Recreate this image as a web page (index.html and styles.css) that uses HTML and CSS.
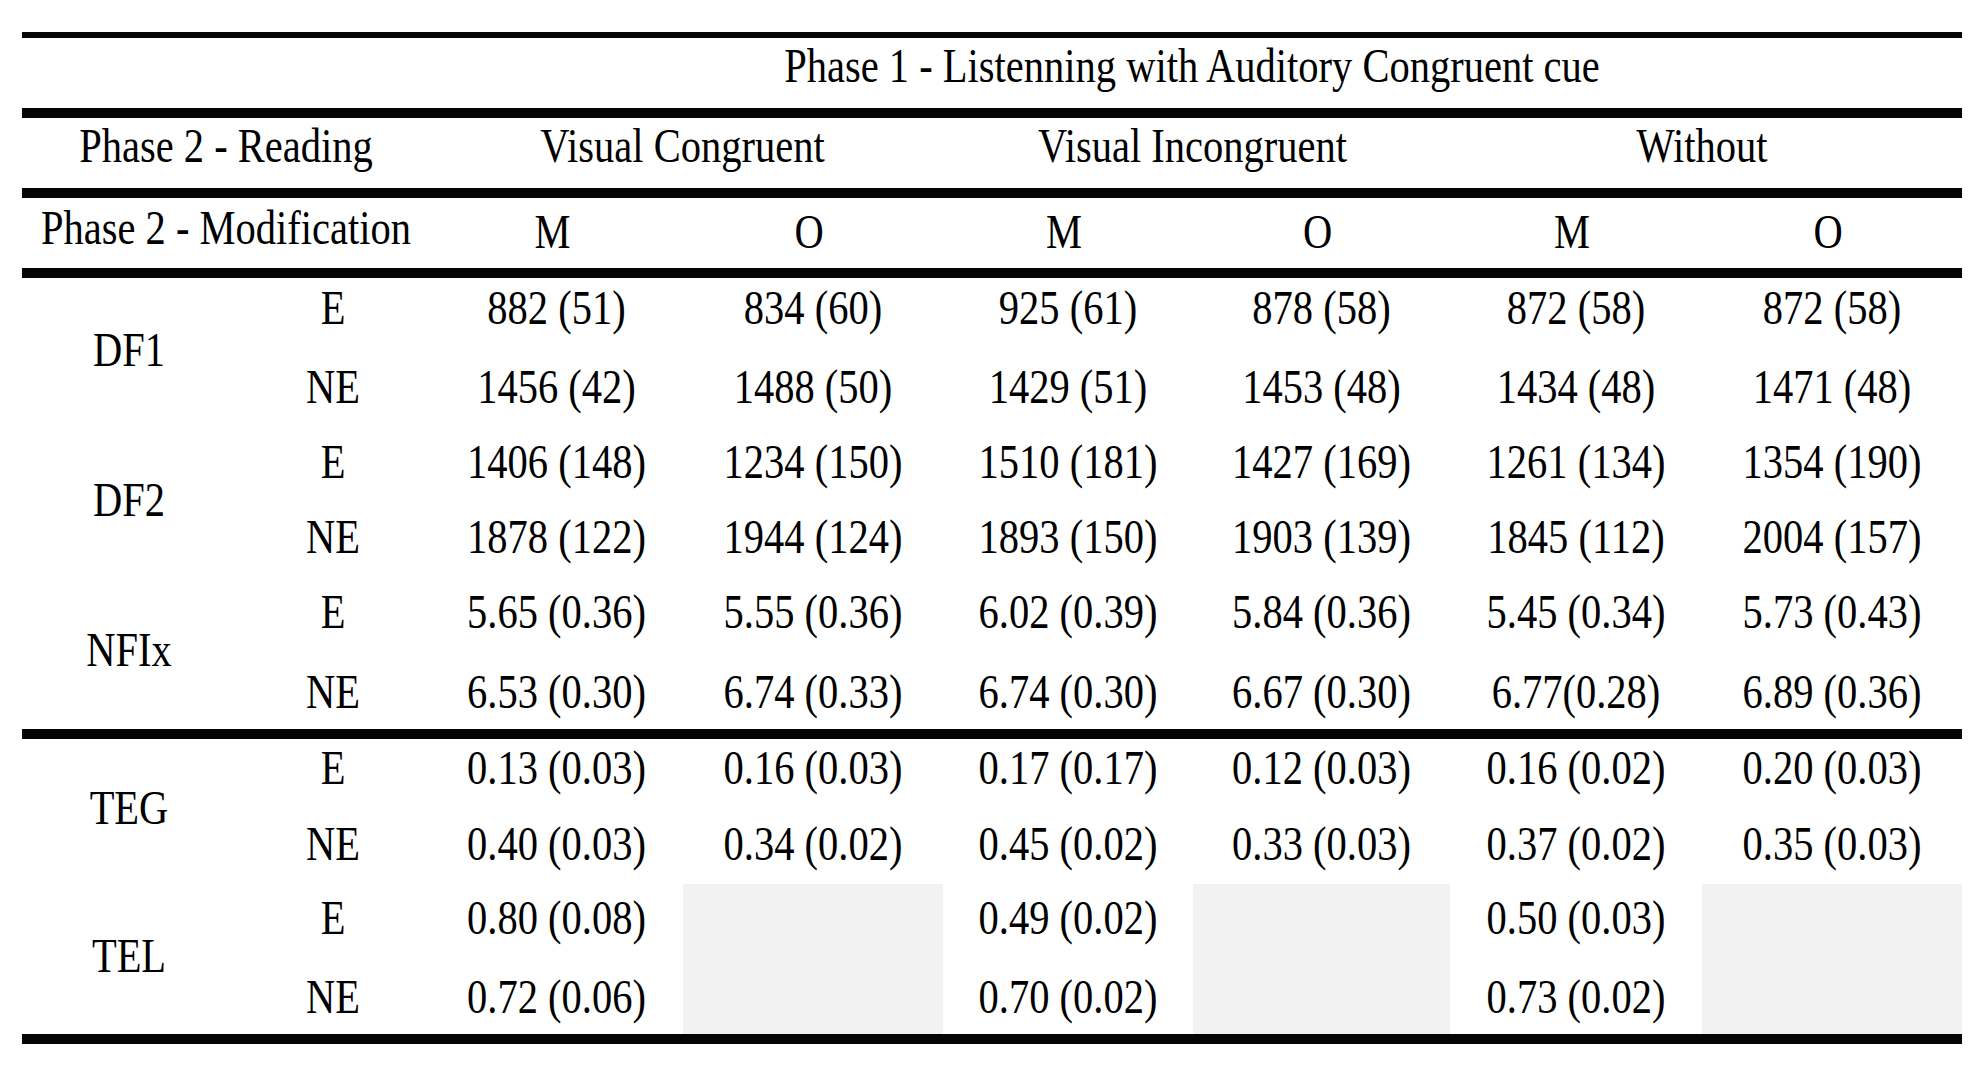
FILE: index.html
```html
<!DOCTYPE html>
<html lang="en">
<head>
<meta charset="utf-8">
<title>Results table</title>
<link rel="stylesheet" href="styles.css">
</head>
<body>
<table class="tbl">
  <colgroup>
    <col class="c-lab">
    <col class="c-sub">
    <col class="c-m1">
    <col class="c-o1">
    <col class="c-m2">
    <col class="c-o2">
    <col class="c-m3">
    <col class="c-o3">
  </colgroup>
  <thead>
    <tr class="r-phase1">
      <th colspan="2"></th>
      <th colspan="6" class="num"><span class="t">Phase 1 - Listenning with Auditory Congruent cue</span></th>
    </tr>
    <tr class="r-reading">
      <th colspan="2"><span class="t">Phase 2 - Reading</span></th>
      <th colspan="2" class="num"><span class="t">Visual Congruent</span></th>
      <th colspan="2" class="num"><span class="t">Visual Incongruent</span></th>
      <th colspan="2" class="num"><span class="t">Without</span></th>
    </tr>
    <tr class="r-mod">
      <th colspan="2" class="mod-label"><span class="t">Phase 2 - Modification</span></th>
      <th class="num"><span class="t">M</span></th>
      <th class="num"><span class="t">O</span></th>
      <th class="num"><span class="t">M</span></th>
      <th class="num"><span class="t">O</span></th>
      <th class="num"><span class="t">M</span></th>
      <th class="num"><span class="t">O</span></th>
    </tr>
  </thead>
  <tbody class="g1">
    <tr class="r first">
      <td rowspan="2" class="lab"><span class="t">DF1</span></td>
      <td class="sub"><span class="t">E</span></td>
      <td class="val"><span class="t">882 (51)</span></td>
      <td class="val"><span class="t">834 (60)</span></td>
      <td class="val"><span class="t">925 (61)</span></td>
      <td class="val"><span class="t">878 (58)</span></td>
      <td class="val"><span class="t">872 (58)</span></td>
      <td class="val"><span class="t">872 (58)</span></td>
    </tr>
    <tr class="r">
      <td class="sub"><span class="t">NE</span></td>
      <td class="val"><span class="t">1456 (42)</span></td>
      <td class="val"><span class="t">1488 (50)</span></td>
      <td class="val"><span class="t">1429 (51)</span></td>
      <td class="val"><span class="t">1453 (48)</span></td>
      <td class="val"><span class="t">1434 (48)</span></td>
      <td class="val"><span class="t">1471 (48)</span></td>
    </tr>
    <tr class="r">
      <td rowspan="2" class="lab"><span class="t">DF2</span></td>
      <td class="sub"><span class="t">E</span></td>
      <td class="val"><span class="t">1406 (148)</span></td>
      <td class="val"><span class="t">1234 (150)</span></td>
      <td class="val"><span class="t">1510 (181)</span></td>
      <td class="val"><span class="t">1427 (169)</span></td>
      <td class="val"><span class="t">1261 (134)</span></td>
      <td class="val"><span class="t">1354 (190)</span></td>
    </tr>
    <tr class="r">
      <td class="sub"><span class="t">NE</span></td>
      <td class="val"><span class="t">1878 (122)</span></td>
      <td class="val"><span class="t">1944 (124)</span></td>
      <td class="val"><span class="t">1893 (150)</span></td>
      <td class="val"><span class="t">1903 (139)</span></td>
      <td class="val"><span class="t">1845 (112)</span></td>
      <td class="val"><span class="t">2004 (157)</span></td>
    </tr>
    <tr class="r">
      <td rowspan="2" class="lab end"><span class="t">NFIx</span></td>
      <td class="sub"><span class="t">E</span></td>
      <td class="val"><span class="t">5.65 (0.36)</span></td>
      <td class="val"><span class="t">5.55 (0.36)</span></td>
      <td class="val"><span class="t">6.02 (0.39)</span></td>
      <td class="val"><span class="t">5.84 (0.36)</span></td>
      <td class="val"><span class="t">5.45 (0.34)</span></td>
      <td class="val"><span class="t">5.73 (0.43)</span></td>
    </tr>
    <tr class="r last">
      <td class="sub"><span class="t">NE</span></td>
      <td class="val"><span class="t">6.53 (0.30)</span></td>
      <td class="val"><span class="t">6.74 (0.33)</span></td>
      <td class="val"><span class="t">6.74 (0.30)</span></td>
      <td class="val"><span class="t">6.67 (0.30)</span></td>
      <td class="val"><span class="t">6.77(0.28)</span></td>
      <td class="val"><span class="t">6.89 (0.36)</span></td>
    </tr>
  </tbody>
  <tbody class="g2">
    <tr class="r first r-teg1">
      <td rowspan="2" class="lab"><span class="t">TEG</span></td>
      <td class="sub"><span class="t">E</span></td>
      <td class="val"><span class="t">0.13 (0.03)</span></td>
      <td class="val"><span class="t">0.16 (0.03)</span></td>
      <td class="val"><span class="t">0.17 (0.17)</span></td>
      <td class="val"><span class="t">0.12 (0.03)</span></td>
      <td class="val"><span class="t">0.16 (0.02)</span></td>
      <td class="val"><span class="t">0.20 (0.03)</span></td>
    </tr>
    <tr class="r r-teg2">
      <td class="sub"><span class="t">NE</span></td>
      <td class="val"><span class="t">0.40 (0.03)</span></td>
      <td class="val"><span class="t">0.34 (0.02)</span></td>
      <td class="val"><span class="t">0.45 (0.02)</span></td>
      <td class="val"><span class="t">0.33 (0.03)</span></td>
      <td class="val"><span class="t">0.37 (0.02)</span></td>
      <td class="val"><span class="t">0.35 (0.03)</span></td>
    </tr>
    <tr class="r">
      <td rowspan="2" class="lab end"><span class="t">TEL</span></td>
      <td class="sub"><span class="t">E</span></td>
      <td class="val"><span class="t">0.80 (0.08)</span></td>
      <td rowspan="2" class="blank end"></td>
      <td class="val"><span class="t">0.49 (0.02)</span></td>
      <td rowspan="2" class="blank end"></td>
      <td class="val"><span class="t">0.50 (0.03)</span></td>
      <td rowspan="2" class="blank end"></td>
    </tr>
    <tr class="r last">
      <td class="sub"><span class="t">NE</span></td>
      <td class="val"><span class="t">0.72 (0.06)</span></td>
      <td class="val"><span class="t">0.70 (0.02)</span></td>
      <td class="val"><span class="t">0.73 (0.02)</span></td>
    </tr>
  </tbody>
</table>
</body>
</html>
```

FILE: styles.css
```css
html, body {
  margin: 0;
  padding: 0;
  background: #ffffff;
}

body {
  padding: 32px 0 0 22px;
}

.tbl {
  width: 1940px;
  table-layout: fixed;
  border-collapse: separate;
  border-spacing: 0;
  font-family: "Liberation Serif", "Times New Roman", serif;
  font-size: 40.5px;
  line-height: 1;
  color: #000000;
}

.c-lab { width: 210px; }
.c-sub { width: 198px; }
.c-m1 { width: 253px; }
.c-o1 { width: 260px; }
.c-m2 { width: 250px; }
.c-o2 { width: 257px; }
.c-m3 { width: 252px; }
.c-o3 { width: 260px; }

.tbl th,
.tbl td {
  padding: 0;
  font-weight: normal;
  text-align: center;
  vertical-align: middle;
  white-space: nowrap;
}

.t {
  display: inline-block;
  transform: scaleY(1.19);
}

.tbl .num {
  padding-right: 8px;
}

.tbl .lab,
.tbl .sub {
  padding-left: 4px;
}

/* header rows */
.r-phase1 { height: 86px; }
.r-phase1 th {
  border-top: 6px solid #050505;
  border-bottom: 10px solid #050505;
  padding-bottom: 12px;
}

.r-reading { height: 80px; }
.r-reading th {
  border-bottom: 10px solid #050505;
  padding-bottom: 12px;
}

.r-mod { height: 80px; }
.r-mod th {
  border-bottom: 10px solid #050505;
}
.r-mod .mod-label {
  padding-bottom: 8px;
}

/* body rows */
.r { height: 75px; }
.r td { padding-bottom: 4px; }
.r.first td { padding-bottom: 12px; }
.r.first td.lab { padding-bottom: 4px; }
.r.last td { padding-bottom: 0; padding-top: 4px; }

.g1 .last { height: 86px; }
.r-teg1 { height: 72px; }
.r-teg2 { height: 73px; }
.g2 .last { height: 85px; }

.last td,
.tbl td.end {
  border-bottom: 10px solid #050505;
}

.blank {
  background: #f2f2f2;
}
```
